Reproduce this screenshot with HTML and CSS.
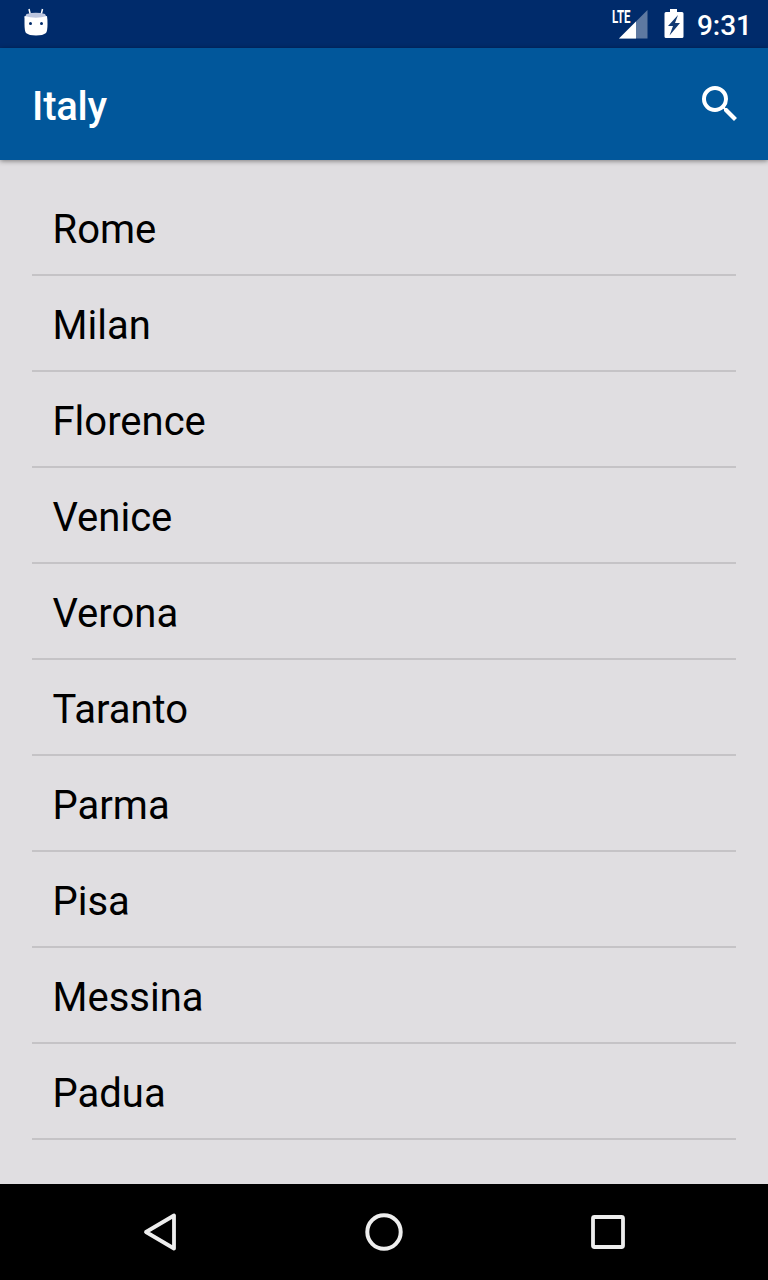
FILE: index.html
```html
<!DOCTYPE html>
<html lang="en">
<head>
<meta charset="utf-8">
<title>Italy</title>
<link rel="stylesheet" href="styles.css">
</head>
<body>
<div class="screen">
  <div class="status-bar">
    <svg class="android-icon" width="26" height="30" viewBox="0 0 26 30" fill="#fff"><path d="M6 1l1.2 5M19.500 1l-1.200 5" stroke="#fff" stroke-width="1.5"/><path d="M3.500 6Q13 3.500 22 6l2 4H1.500z" fill="#bcc6df"/><path d="M1.500 8Q13 11.500 24 8q.5 3 .5 8 0 7-1.500 9-3 2.500-10 2.500T3 25q-1.500-2-1.500-9T1.500 8z"/><circle cx="7.500" cy="15.500" r="1.500" fill="#002b6b"/><circle cx="18.500" cy="15.500" r="1.500" fill="#002b6b"/></svg>
    <div class="status-right">
      <svg class="signal" width="36" height="42" viewBox="0 -6 36 42"><path d="M35.500 1v28.500H7z" fill="#fff" opacity=".37"/><path d="M24 12.500v17H7z" fill="#fff"/><text class="lte" x="0" y="13.500" textLength="18.500" lengthAdjust="spacingAndGlyphs" fill="#fff">LTE</text></svg>
      <svg class="battery" width="20" height="30" viewBox="0 0 20 30"><path d="M6 0h7v3h5q1.500 0 1.500 1.500v23q0 1.500-1.500 1.500H2q-1.500 0-1.500-1.500v-23Q.5 3 2 3h4z" fill="#fff"/><path d="M14 6L4 17h5l-3.500 9.500L16 14h-5z" fill="#123a74"/></svg>
      <span class="clock">9:31</span>
    </div>
  </div>
  <header class="app-bar">
    <h1 class="title">Italy</h1>
    <svg class="search" width="48" height="48" viewBox="0 0 24 24" fill="#fff"><path d="M15.5 14h-.79l-.28-.27A6.47 6.47 0 0 0 16 9.500 6.500 6.500 0 1 0 9.500 16c1.610 0 3.090-.59 4.230-1.570l.27.28v.79l5 4.990L20.490 19l-4.990-5zm-6 0C7.010 14 5 11.990 5 9.500S7.010 5 9.500 5 14 7.010 14 9.500 11.990 14 9.500 14z"/></svg>
  </header>
  <ul class="city-list">
    <li class="city">Rome</li>
    <li class="city">Milan</li>
    <li class="city">Florence</li>
    <li class="city">Venice</li>
    <li class="city">Verona</li>
    <li class="city">Taranto</li>
    <li class="city">Parma</li>
    <li class="city">Pisa</li>
    <li class="city">Messina</li>
    <li class="city">Padua</li>
  </ul>
  <nav class="nav-bar">
    <svg width="60" height="60" viewBox="0 0 60 60" fill="none" stroke="#eee" stroke-width="3.8" stroke-linejoin="round"><path d="M44 15.500v33L16 32z"/></svg>
    <svg width="60" height="60" viewBox="0 0 60 60" fill="none" stroke="#eee" stroke-width="4"><circle cx="30" cy="32" r="16.700"/></svg>
    <svg width="60" height="60" viewBox="0 0 60 60" fill="none" stroke="#eee" stroke-width="3.8"><rect x="15" y="17" width="30" height="30" rx="1.500"/></svg>
  </nav>
</div>
</body>
</html>
```
FILE: styles.css
```css
body { margin: 0; font-family: Roboto, sans-serif; }
.screen { width: 768px; height: 1280px; display: flex; flex-direction: column; background: #e0dee1; overflow: hidden; }
.status-bar { height: 48px; flex: none; box-sizing: border-box; padding: 0 16px 0 23px; display: flex; align-items: center; justify-content: space-between; background: #002b6b; color: #fff; }
.android-icon { margin-bottom: 2px; }
.status-right { display: flex; align-items: center; }
.signal { overflow: visible; }
.lte { font-size: 17.5px; font-weight: 700; }
.battery { margin: 0 13px 0 16px; }
.clock { font-size: 28px; font-weight: 500; line-height: 46px; padding-top: 4px; }
.app-bar { height: 112px; flex: none; box-sizing: border-box; padding: 0 24px 0 32px; display: flex; align-items: center; justify-content: space-between; background: #01579b; color: #fff; box-shadow: 0 1px 5px rgba(0,0,0,.45); }
.title { margin: 6px 0 0; font-size: 40px; font-weight: 500; line-height: 48px; letter-spacing: -.2px; }
.city-list { margin: 0; padding: 20px 32px 0; list-style: none; flex: 1; }
.city { height: 96px; box-sizing: border-box; padding-left: 20.5px; border-bottom: 2px solid #c5c3c6; font-size: 40px; line-height: 100px; color: #000; }
.nav-bar { height: 96px; flex: none; box-sizing: border-box; padding: 0 130px 4px; display: flex; align-items: center; justify-content: space-between; background: #000; }
```
